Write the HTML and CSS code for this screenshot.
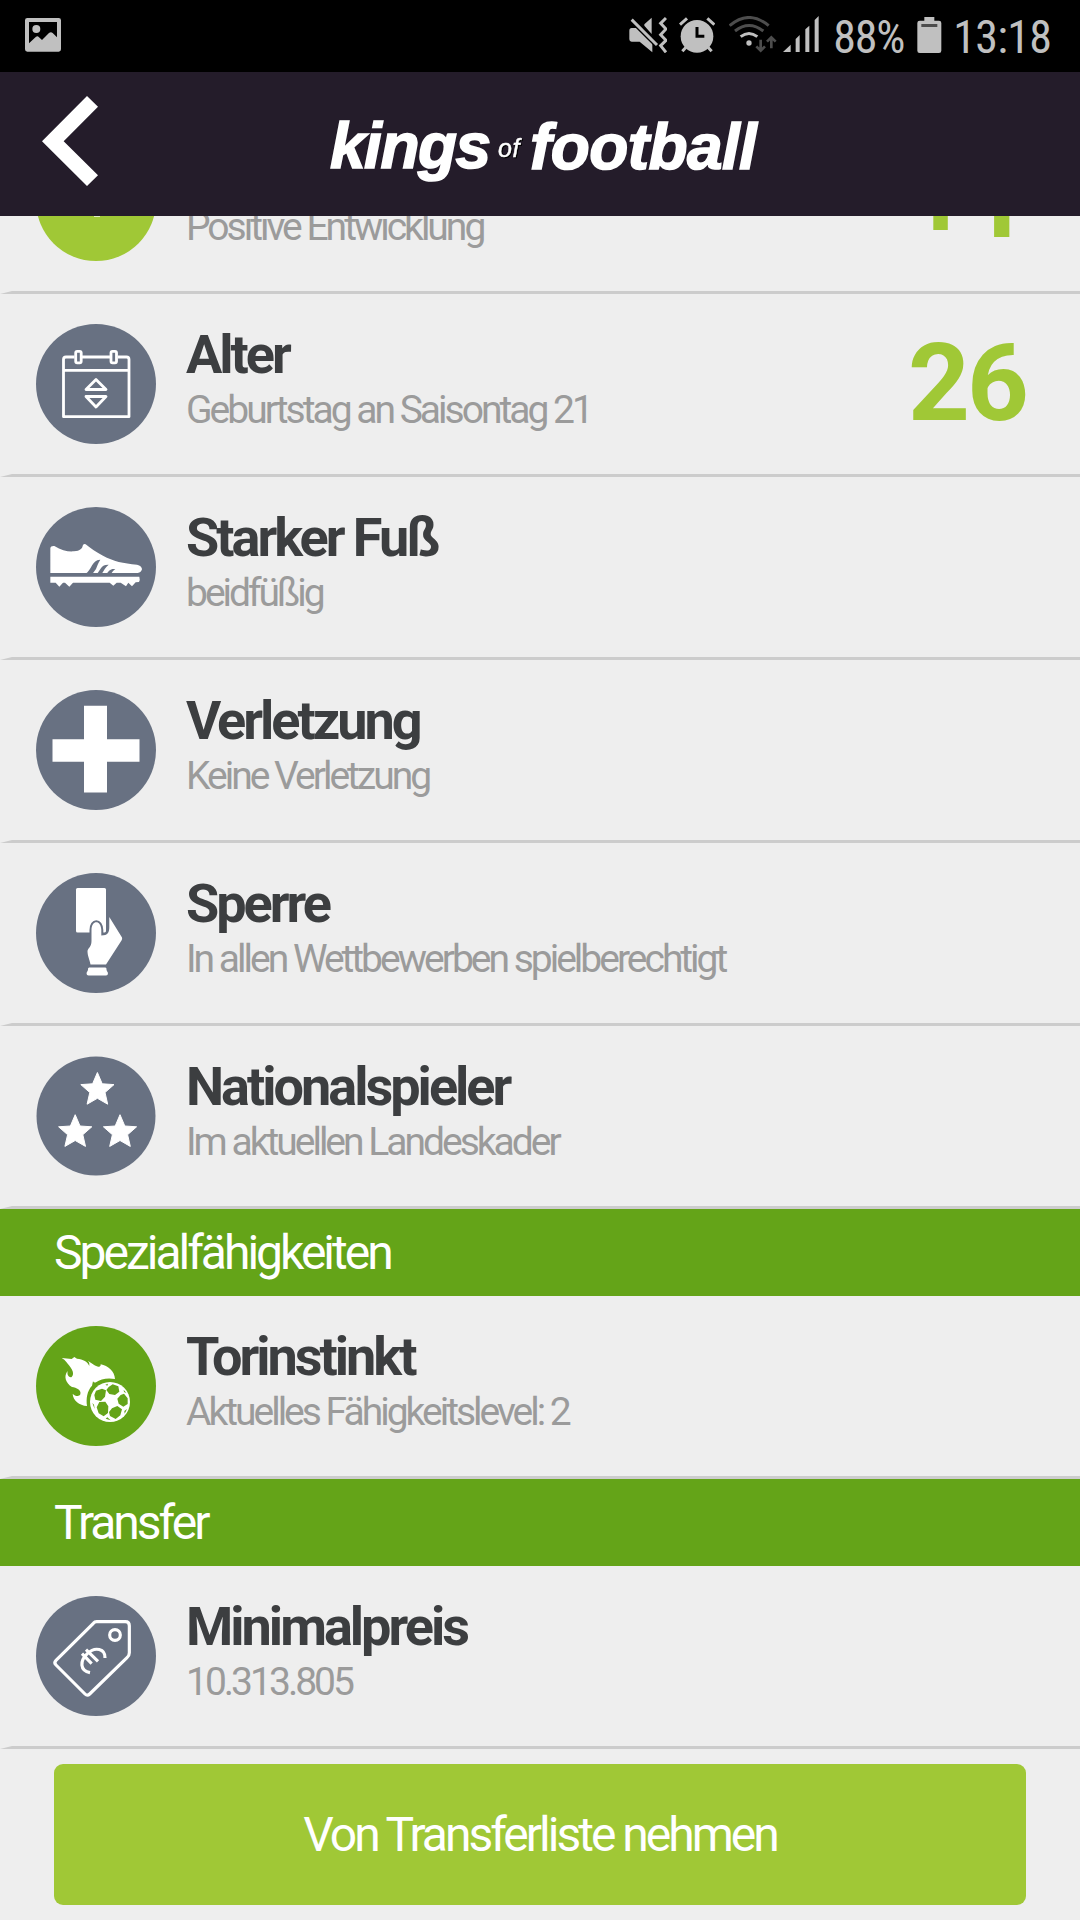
FILE: index.html
```html
<!DOCTYPE html>
<html lang="de">
<head>
<meta charset="utf-8">
<title>Kings of Football</title>
<link rel="stylesheet" href="styles.css">
</head>
<body>
<div class="statusbar">
  <svg class="st-image" viewBox="75 54 108 101"><path fill-rule="evenodd" d="M82 54H176Q183 54 183 61V148Q183 155 176 155H82Q75 155 75 148V61Q75 54 82 54ZM87 66V130L108 110Q113 106 117 112L126 120L147 99Q153 94 158 99L171 112V66Z"/><circle cx="109" cy="87" r="12"/></svg>
  <svg class="st-mute" viewBox="86 48 116 112"><path d="M87 92Q87 84 94 84H109L156 130V157L118 125H94Q87 125 87 118ZM154 53V102L132 77V73Z"/><path d="M94 59L170 135" fill="none" stroke="#000" stroke-width="17"/><path d="M94 59L170 135" fill="none" stroke="#c0c0c0" stroke-width="9"/><path d="M197 54L181 70L197 87L181 104L197 121L181 137L197 157" fill="none" stroke="#c0c0c0" stroke-width="9"/></svg>
  <svg class="st-alarm" viewBox="237 48 109 112"><circle cx="291" cy="109" r="49"/><path d="M240 74L261 55M343 74L322 55M258 142L247 154M324 142L335 154" stroke="#c0c0c0" stroke-width="9"/><path d="M291 81V109H313" fill="none" stroke="#000" stroke-width="9"/></svg>
  <svg class="st-wifi" viewBox="388 48 143 112"><g fill="none" stroke-width="9"><path stroke="#4d4d4d" d="M390 77Q448 28 507 77M406 93Q448 60 491 93"/><path stroke="#c0c0c0" d="M423 110Q448 91 473 110"/><path stroke="#4d4d4d" stroke-width="8" d="M483 119V151M470 139L483 152L496 139M515 145V113M502 125L515 112L528 125"/></g><circle cx="448" cy="129" r="8"/></svg>
  <svg class="st-signal" viewBox="550 48 108 112"><path d="M550 156L573 134V156ZM588 156V117L600 105V156ZM617 156V88L629 77V156ZM645 156V60L657 48V156Z"/></svg>
  <span class="st-text st-percent">88%</span>
  <svg class="st-battery" viewBox="950 48 74 112"><path d="M972 51H1002V62H1016Q1023 62 1023 69V152Q1023 159 1016 159H958Q951 159 951 152V69Q951 62 958 62H972Z"/><path d="M963 72H1011V81H963Z" fill="#4d4d4d"/></svg>
  <span class="st-text st-clock">13:18</span>
</div>

<header class="header">
  <svg class="back" viewBox="125 288 168 270"><path d="M260 288L293 320L190 424L293 526L260 558L125 424Z"/></svg>
  <svg class="logo" viewBox="300 72 480 144">
    <text class="logo-word" x="330" y="167.5" letter-spacing="-1.5">kings</text>
    <text class="logo-of" x="498" y="156.5">of</text>
    <text class="logo-word" x="530" y="169" letter-spacing="-0.6">football</text>
  </svg>
</header>

<main class="list">
  <div class="row row-partial">
    <svg class="icon" viewBox="0 0 120 120"><circle class="lime" cx="60" cy="60" r="60"/><path d="M58 60H64V75.700H58Z"/></svg>
    <div class="info"><p class="sub">Positive Entwicklung</p></div>
    <div class="value">+1</div>
  </div>

  <div class="row">
    <svg class="icon" viewBox="0 0 120 120"><circle class="slate" cx="60" cy="60" r="60"/><g class="line"><path d="M38.500 33H30Q27.500 33 27.500 35.500V92.700H93V35.500Q93 33 90.500 33H82M46 33H74M27.500 46.300H93"/><rect x="39.700" y="27.300" width="5.500" height="11.500" rx="1.500"/><rect x="75" y="27.300" width="5.500" height="11.500" rx="1.500"/><path d="M60 55.500L70 65.500H50ZM60 83L70 72.500H50Z"/></g></svg>
    <div class="info"><h2 class="title">Alter</h2><p class="sub">Geburtstag an Saisontag 21</p></div>
    <div class="value">26</div>
  </div>

  <div class="row">
    <svg class="icon" viewBox="108 81 360 360"><circle class="slate" cx="288" cy="261" r="180"/><path d="M151 279V205Q152 197 163 198C185 211 205 216 222 214C241 212 247 205 248 197Q250 190 257 193C272 205 289 217 309 227C340 244 370 250 411 254Q426 258 426 268Q424 277 413 279ZM151 290H418Q421 300 417 306L407 307L396 319L385 308L378 319L362 308H350L340 317L329 308H219L208 320L195 308H189L178 320L167 308H151Z"/><path class="slate" d="M256 282C276 269 276 238 301 239C294 249 292 257 288 267L277 282ZM290 282C303 269 303 253 326 254C316 261 313 270 305 282ZM319 282C327 273 330 265 346 267C337 273 337 278 332 282Z"/></svg>
    <div class="info"><h2 class="title">Starker Fuß</h2><p class="sub">beidfüßig</p></div>
  </div>

  <div class="row">
    <svg class="icon" viewBox="0 0 120 120"><circle class="slate" cx="60" cy="60" r="60"/><path d="M48 15.700H71V49.300H103.500V71.700H71V102.500H48V71.700H16.500V49.300H48Z"/></svg>
    <div class="info"><h2 class="title">Verletzung</h2><p class="sub">Keine Verletzung</p></div>
  </div>

  <div class="row">
    <svg class="icon" viewBox="0 0 120 120"><circle class="slate" cx="60" cy="60" r="60"/><rect x="40" y="15" width="30" height="44.500" rx="1.500"/><path class="hand" d="M55.500 57C55.500 46.500 65 46.500 65.300 57V62.500C72 62.500 73.300 59 73.300 54V44L86 64.500Q86.500 66 85.500 67.500L70 91.500H54.500C53.500 86 51.500 83 51.500 78C52 75 55.500 74 55.500 68Z"/><path d="M53 94.500H69.500Q71 95 70.500 97L72 100Q72 102.500 70 102.500H52.500Q50.500 102.500 50.500 100L52 97Q51.500 95 53 94.500Z"/></svg>
    <div class="info"><h2 class="title">Sperre</h2><p class="sub">In allen Wettbewerben spielberechtigt</p></div>
  </div>

  <div class="row">
    <svg class="icon" viewBox="0 0 120 120"><defs><path id="star" d="M0-17.500L4.800-6.200L16.600-5.400L7.600 2.500L10.300 14.200L0 8.300L-10.300 14.200L-7.600 2.500L-16.600-5.400L-4.800-6.200Z"/></defs><circle class="slate" cx="60" cy="60" r="59.500"/><g class="stars"><use href="#star" x="61.400" y="34"/><use href="#star" x="39.200" y="76.200"/><use href="#star" x="84" y="76.200"/></g></svg>
    <div class="info"><h2 class="title">Nationalspieler</h2><p class="sub">Im aktuellen Landeskader</p></div>
  </div>

  <h1 class="section">Spezialfähigkeiten</h1>

  <div class="row">
    <svg class="icon" viewBox="0 0 360 360"><circle class="green" cx="180" cy="180" r="180"/><path d="M77 96L107 99L115 93L123 98C141 99 156 108 160 120Q163 112 156 104C169 114 181 122 190 122Q195 121 194 115C216 119 236 136 237 159C213 155 194 159 180 169Q174 171 171 166L168 179C153 195 150 218 153 240C130 238 111 224 110 203C117 211 130 213 133 205C137 192 121 185 108 183C89 171 82 151 95 135C92 149 101 156 107 153C120 141 101 120 91 108Q86 100 77 96Z"/><circle cx="222" cy="228" r="60"/><g class="green"><path d="M180 194L198 188L210 193L207 212L195 225L178 221L175 207ZM218 183L230 175L247 181L250 197L237 207L220 204L211 192ZM254 207L264 203L275 217V234L262 242L248 233L244 218ZM228 247L244 240L258 250L253 268L239 279L222 270L219 258ZM190 228L208 227L217 241L216 261L203 271L188 262L182 244Z"/><path d="M208 176L216 173L214 179ZM263 191L271 201L264 198ZM273 249L266 263L265 255ZM209 278L224 283L214 274ZM169 231L176 249L174 236Z"/></g></svg>
    <div class="info"><h2 class="title">Torinstinkt</h2><p class="sub">Aktuelles Fähigkeitslevel: 2</p></div>
  </div>

  <h1 class="section">Transfer</h1>

  <div class="row">
    <svg class="icon" viewBox="108 108 360 360"><circle class="slate" cx="288" cy="288" r="180"/><g class="tag"><path d="M290 185H376Q388 185 388 197V278Q388 287 381 293L269 402Q262 409 255 402L168 315Q161 308 168 301L280 190Q284 185 290 185Z"/><circle cx="345" cy="225" r="16"/><path d="M315 294C316 267 286 258 262 281C239 303 239 332 270 338M246 281L275 311M258 269L294 304"/></g></svg>
    <div class="info"><h2 class="title">Minimalpreis</h2><p class="sub">10.313.805</p></div>
  </div>

  <button class="action">Von Transferliste nehmen</button>
</main>
</body>
</html>
```
FILE: styles.css
```css
* {
  box-sizing: border-box;
}

body {
  margin: 0;
  width: 1080px;
  height: 1920px;
  overflow: hidden;
  display: flex;
  flex-direction: column;
  background: #eee;
  font-family: Roboto, "Liberation Sans", sans-serif;
  letter-spacing: -3px;
}

h1, h2, p {
  margin: 0;
  font-weight: 400;
}

svg {
  display: block;
  flex: none;
  fill: #fff;
}

/* Status bar */

.statusbar {
  flex: none;
  height: 72px;
  padding: 16px 0 0 25px;
  display: flex;
  align-items: flex-start;
  background: #000;
  color: #c0c0c0;
}

.statusbar svg {
  height: 37.33px;
  fill: #c0c0c0;
}

.statusbar .st-image {
  width: 36px;
  height: 33.67px;
  margin-top: 2px;
}

.st-mute {
  width: 38.67px;
  margin-left: 567.67px;
}

.st-alarm {
  width: 36.33px;
  margin-left: 11.67px;
}

.st-wifi {
  width: 47.67px;
  margin-left: 14px;
}

.st-signal {
  width: 36px;
  margin-left: 6.33px;
}

.st-battery {
  width: 24.67px;
}

.st-text {
  font-family: "Roboto Condensed", Roboto, sans-serif;
  font-size: 46px;
  line-height: 42px;
  letter-spacing: -0.7px;
  white-space: nowrap;
}

.st-percent {
  width: 83.7px;
  margin-left: 14px;
  letter-spacing: -1.2px;
}

.st-clock {
  margin-left: 11.5px;
}

/* App header */

.header {
  flex: none;
  height: 144px;
  display: flex;
  background: #241c2a;
}

.back {
  width: 56px;
  height: 90px;
  margin: 24px 0 0 41.67px;
}

.logo {
  width: 480px;
  height: 144px;
  margin-left: 202.33px;
  font-family: "Liberation Sans", sans-serif;
  font-style: italic;
  font-weight: 700;
}

.logo-word {
  font-size: 64px;
  stroke: #fff;
  stroke-width: 1.6px;
}

.logo-of {
  font-size: 25px;
  font-weight: 400;
  letter-spacing: 0.5px;
  stroke: #fff;
  stroke-width: 0.5px;
  filter: drop-shadow(1px 1px 0 #000);
}

/* Player details */

.list {
  flex: 1;
  overflow: hidden;
}

.row {
  height: 183px;
  padding: 0 54px 0 24px;
  display: flex;
  border-bottom: 3px solid #ccc;
  border-left: 12px solid transparent;
}

.row-partial {
  margin-top: -105px;
}

.icon {
  width: 120px;
  height: 120px;
  margin-top: 30px;
}

.info {
  flex: 1;
  padding: 32px 0 0 30px;
}

.row-partial .info {
  padding-top: 89px;
}

.title {
  font-size: 54px;
  line-height: 57px;
  font-weight: 700;
  color: #3c3e40;
}

.sub {
  font-size: 39px;
  line-height: 55px;
  color: #9b9b9b;
}

.value {
  font-size: 108px;
  line-height: 178px;
  font-weight: 700;
  color: #a0c836;
}

.slate {
  fill: #687182;
}

.lime {
  fill: #a0c836;
}

.green {
  fill: #64a418;
}

.line {
  fill: none;
  stroke: #fff;
  stroke-width: 2.8px;
  stroke-linejoin: round;
}

.hand {
  stroke: #687182;
  stroke-width: 4px;
  paint-order: stroke;
}

.stars {
  stroke: #fff;
  stroke-width: 1px;
  stroke-linejoin: round;
}

.tag {
  fill: none;
  stroke: #fff;
  stroke-width: 9.5px;
}

.section {
  height: 87px;
  padding-left: 54px;
  background: #64a418;
  color: #fff;
  font-size: 48px;
  line-height: 87px;
}

.action {
  display: block;
  width: 972px;
  height: 141px;
  margin: 15px 54px 0;
  padding: 0;
  border: 0;
  border-radius: 9px;
  background: #a0c836;
  color: #fff;
  font: 400 48px/141px Roboto, "Liberation Sans", sans-serif;
  letter-spacing: -3px;
}
```
